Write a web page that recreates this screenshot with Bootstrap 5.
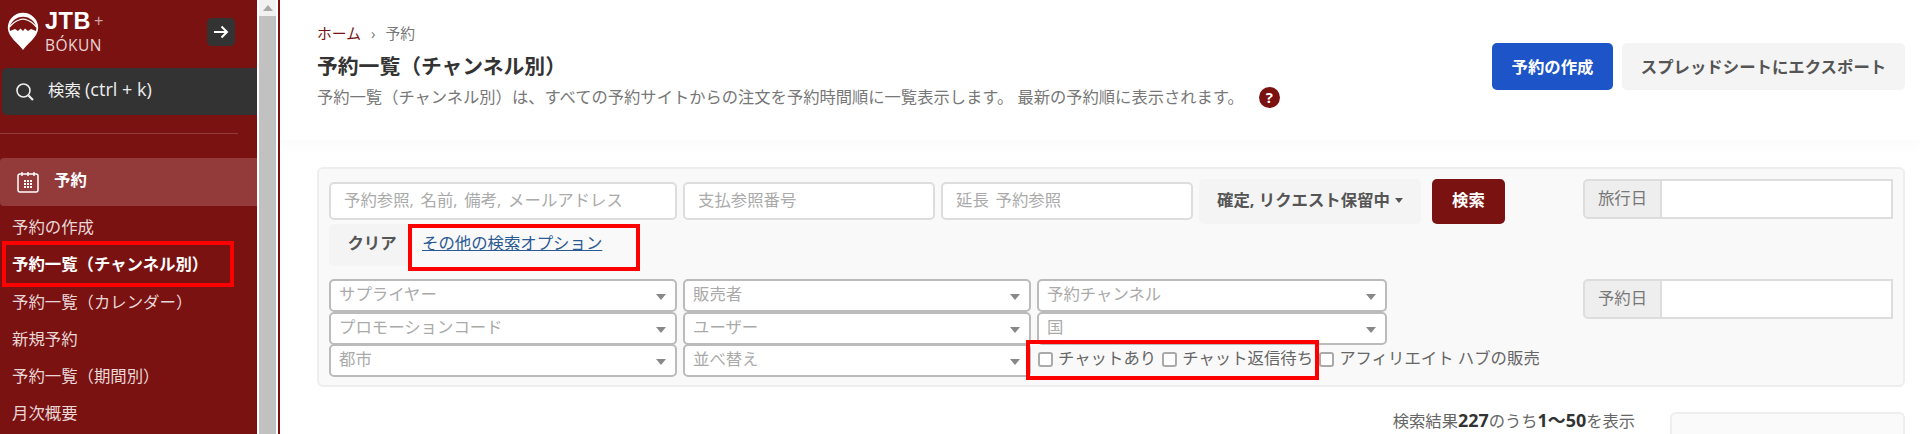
<!DOCTYPE html>
<html lang="ja">
<head>
<meta charset="utf-8">
<title>予約一覧</title>
<link href="https://cdn.jsdelivr.net/npm/bootstrap@5.3.0/dist/css/bootstrap.min.css" rel="stylesheet">
<style>
html,body{height:434px;overflow:hidden}
body{font-family:"Open Sans","Noto Sans CJK JP",sans-serif;font-size:16.4px;color:#555;background:#fff;position:relative}
.shell{height:434px;overflow:hidden}
.lat{font-size:1.1em}
.side{width:257px;background:#7a1212;flex:none;height:434px;overflow:hidden;color:#e9d6d6}
.logo-row{height:68px;padding:12px 0 0 7px}
.logo-words{margin-left:6px;color:#e8d5d5;line-height:1}
.logo-jtb{font-family:"Liberation Sans",sans-serif;font-weight:700;font-size:23.5px;color:#fff;line-height:18px;letter-spacing:.5px}
.logo-jtb span{font-weight:400;font-size:16px;color:#c9a5a5;vertical-align:3px;margin-left:3px}
.logo-bok{font-family:"Open Sans",sans-serif;font-size:15.5px;letter-spacing:.5px;margin-top:6px;line-height:18px}
.arrow-btn{width:28px;height:28px;background:#333;border-radius:5px;margin:6px 22px 0 auto;flex:none}
.side-search{height:47px;margin-left:2px;background:#333;border-radius:5px 0 0 5px;color:#eee;padding-left:13px;gap:13px}
.side-search span{margin-bottom:3px}
.side-rule{height:1px;width:238px;background:#933a3a;margin:18px 0 24px}
.side-active{height:48px;background:#933a3a;border-radius:4px 0 0 4px;color:#fff;font-weight:700;padding-left:17px;gap:15px}
.side-active span{margin-bottom:4px}
.side-list{padding:2px 0 0 12px;list-style:none;margin:0}
.side-list li{height:37.3px;line-height:37.3px;white-space:nowrap}
.side-list .on{font-weight:700;color:#fff}
.sbar{width:21px;flex:none;background:#fff;padding:0 2px;height:434px}
.sbar-up{height:16px;background:#f1f1f1}
.sbar-up::after{content:"";display:block;border:5px solid transparent;border-top:0;border-bottom:6px solid #a8a8a8;width:0;margin:auto;transform:translateY(5px)}
.sbar-thumb{height:418px;background:#c1c1c1}
.vline{width:2px;background:#7a1212;flex:none}
.main-col{flex:1;min-width:0}
.page-head{height:140px;padding:22px 15px 0 37px;box-shadow:0 6px 14px rgba(0,0,0,.025);background:#fff}
.crumbs{font-size:14.8px;line-height:22px;color:#777;gap:10px}
.crumbs a{color:#7a1212;text-decoration:none}
.ttl{font-size:20.8px;font-weight:700;color:#333;margin:10px 0 0;line-height:24px}
.desc{font-size:16.3px;color:#777;line-height:22px;margin-top:8px;gap:15px}
.help{width:21px;height:21px;border-radius:50%;background:#7a1212;color:#fff;font-size:15px;font-weight:700;line-height:21px;text-align:center;flex:none;margin-top:1px}
.head-btns{gap:9px;padding-top:21px}
.btn-make,.btn-exp{height:47px;font-size:16.4px;font-weight:700;border-radius:5px;border:0;line-height:44px;padding:0}
.btn-make{background:#1d55c8;color:#fff;width:121px;white-space:nowrap}
.btn-exp{background:#f4f4f4;color:#555;width:283px;white-space:nowrap}
.panel-box{margin:27px 15px 0 37px;height:220px;background:#f9f9f9;border:2px solid #eee;border-radius:6px;padding:13px 10px 0 10px}
.left-part{width:1254px;flex:none}
.inp{height:38px;border:2px solid #ddd;border-radius:5px;background:#fff;font-size:16.4px;padding:0 13px 3px;color:#aaa}
.inp::placeholder{color:#aaa;opacity:1;word-spacing:2.5px}
.i1{width:348px}.i2{width:252px}.i3{width:252px}
.row1{gap:6px;height:38px}
.stat-btn{width:222px;height:45px;margin-top:-3px;background:#f4f4f4;border:0;border-radius:5px;font-size:16.4px;font-weight:700;color:#555;white-space:nowrap;padding:0 0 3px;flex:none}
.stat-btn i{display:inline-block;border:4px solid transparent;border-top:5px solid #555;border-bottom:0;vertical-align:3px;margin-left:5px}
.find-btn{width:73px;height:45px;margin:-3px 0 0 5px;background:#7a1212;color:#fff;border:0;border-radius:5px;font-size:16.4px;font-weight:700;padding:0 0 3px;flex:none}
.row2{height:42px;margin-top:4px}
.clr{width:79px;height:42px;background:#f4f4f4;border:0;border-radius:5px 0 0 5px;font-weight:700;font-size:16.4px;color:#555;padding:0 0 3px 7px}
.more{color:#2a5a94;margin:0 0 3px 14px;font-size:16.4px}
.sel-grid{display:grid;grid-template-columns:348px 348px 350px;grid-auto-rows:32.5px;column-gap:6px;margin-top:13px}
.sel{height:33px;border:2px solid #bbb;border-radius:5px;background:#fff;color:#aaa;padding:0 8px;line-height:25px;font-size:16.4px}
.sel i{border:5px solid transparent;border-top:6px solid #888;border-bottom:0;margin-right:1px;margin-top:3px}
.checks{font-size:16.4px;color:#666;white-space:nowrap;height:32px;padding-bottom:3px}
.cbx{width:15px;height:15px;border:2px solid #aaa;border-radius:3px;background:#fff;flex:none;margin:2px 5px 0 6px}
.cbx.first{margin-left:1px}
.date-part{width:310px;flex:none}
.date-grp{height:40px;margin-top:-3px}
.date-grp+.date-grp{margin-top:60px}
.date-lab{width:79px;background:#eee;border:2px solid #ddd;border-radius:5px 0 0 5px;text-align:center;line-height:33px;color:#777}
.date-val{flex:1;background:#fff;border:2px solid #ddd;border-left:0}
.result-row{margin:25px 15px 0 0;gap:35px}
.result-text{font-size:16.3px;color:#666;margin-top:-2px;line-height:20px;white-space:nowrap}
.result-text b{color:#333}
.page-box{width:235px;height:22px;background:#fafafa;border:2px solid #eee;border-bottom:0;border-radius:6px 6px 0 0}
.mark-red{position:absolute;border:4px solid #f00;pointer-events:none}
.m1{left:2px;top:241px;width:232px;height:46px}
.m2{left:408px;top:224px;width:232px;height:47px}
.m3{left:1026px;top:340px;width:293px;height:40px}
</style>
</head>
<body>
<div class="d-flex shell">
  <aside class="side">
    <div class="logo-row d-flex">
      <svg width="32" height="38" viewBox="0 0 32 38" aria-hidden="true">
        <path d="M16 38C12 32 1 25 .8 16A15.2 15.2 0 0 1 31.2 16C31 25 20 32 16 38Z" fill="#fff"/>
        <path d="M2.6 16.5A13.5 13.5 0 0 1 29.4 16.5L29 19 24 17 21 19 18 16.5 16 19 13.5 16.5 11 19 8 17 3 19Z" fill="#7a1212"/>
        <path d="M2.5 15C6 11 9 9 12 8C14 7 18 7 20 8C23 9 26 11 29.5 15" stroke="#fff" stroke-width="1.3" fill="none"/>
      </svg>
      <div class="logo-words">
        <div class="logo-jtb">JTB<span>+</span></div>
        <div class="logo-bok">BÓKUN</div>
      </div>
      <div class="arrow-btn d-flex align-items-center justify-content-center">
        <svg width="16" height="14" viewBox="0 0 16 14" aria-hidden="true"><path d="M1 7H14M8.5 1.5 14 7 8.5 12.5" fill="none" stroke="#fff" stroke-width="2"/></svg>
      </div>
    </div>
    <div class="side-search d-flex align-items-center">
      <svg width="20" height="20" viewBox="0 0 20 20" aria-hidden="true"><circle cx="8.5" cy="8.5" r="6.5" fill="none" stroke="#eee" stroke-width="1.6"/><path d="M13.5 13.5 18 18" stroke="#eee" stroke-width="2.2"/></svg>
      <span>検索 <span class="lat">(ctrl + k)</span></span>
    </div>
    <div class="side-rule"></div>
    <div class="side-active d-flex align-items-center">
      <svg width="22" height="22" viewBox="0 0 22 22" aria-hidden="true"><rect x="1" y="3" width="20" height="18" rx="2" fill="none" stroke="#fff" stroke-width="1.5"/><path d="M5 1v4M11 1v4M17 1v4" stroke="#fff" stroke-width="1.4"/><path d="M7 9h2v2H7zM10 9h2v2h-2zM13 9h2v2h-2zM7 12h2v2H7zM10 12h2v2h-2zM13 12h2v2h-2zM7 15h2v2H7zM10 15h2v2h-2zM13 15h2v2h-2z" fill="#fff"/></svg>
      <span>予約</span>
    </div>
    <ul class="side-list">
      <li>予約の作成</li>
      <li class="on">予約一覧（チャンネル別）</li>
      <li>予約一覧（カレンダー）</li>
      <li>新規予約</li>
      <li>予約一覧（期間別）</li>
      <li>月次概要</li>
    </ul>
  </aside>
  <div class="sbar"><div class="sbar-up"></div><div class="sbar-thumb"></div></div>
  <div class="vline"></div>
  <main class="main-col">
    <div class="page-head d-flex justify-content-between">
      <div>
        <div class="crumbs d-flex align-items-center"><a href="#">ホーム</a><span>›</span><span>予約</span></div>
        <h1 class="ttl">予約一覧（チャンネル別）</h1>
        <div class="desc d-flex align-items-center"><span>予約一覧（チャンネル別）は、すべての予約サイトからの注文を予約時間順に一覧表示します。 最新の予約順に表示されます。</span><span class="help">?</span></div>
      </div>
      <div class="head-btns d-flex align-items-start">
        <button class="btn-make">予約の作成</button>
        <button class="btn-exp">スプレッドシートにエクスポート</button>
      </div>
    </div>
    <div class="panel-box d-flex">
      <div class="left-part">
        <div class="d-flex row1">
          <input class="inp i1" placeholder="予約参照, 名前, 備考, メールアドレス">
          <input class="inp i2" placeholder="支払参照番号">
          <input class="inp i3" placeholder="延長 予約参照">
          <button class="stat-btn">確定, リクエスト保留中<i></i></button>
          <button class="find-btn">検索</button>
        </div>
        <div class="row2 d-flex align-items-center">
          <button class="clr">クリア</button>
          <a class="more" href="#">その他の検索オプション</a>
        </div>
        <div class="sel-grid">
          <div class="sel d-flex justify-content-between"><span>サプライヤー</span><i class="align-self-center"></i></div>
          <div class="sel d-flex justify-content-between"><span>販売者</span><i class="align-self-center"></i></div>
          <div class="sel d-flex justify-content-between"><span>予約チャンネル</span><i class="align-self-center"></i></div>
          <div class="sel d-flex justify-content-between"><span>プロモーションコード</span><i class="align-self-center"></i></div>
          <div class="sel d-flex justify-content-between"><span>ユーザー</span><i class="align-self-center"></i></div>
          <div class="sel d-flex justify-content-between"><span>国</span><i class="align-self-center"></i></div>
          <div class="sel d-flex justify-content-between"><span>都市</span><i class="align-self-center"></i></div>
          <div class="sel d-flex justify-content-between"><span>並べ替え</span><i class="align-self-center"></i></div>
          <div class="checks d-flex align-items-center">
            <span class="cbx first"></span><span>チャットあり</span><span class="cbx"></span><span>チャット返信待ち</span><span class="cbx"></span><span>アフィリエイト ハブの販売</span>
          </div>
        </div>
      </div>
      <div class="date-part">
        <div class="date-grp d-flex"><div class="date-lab">旅行日</div><div class="date-val"></div></div>
        <div class="date-grp d-flex"><div class="date-lab">予約日</div><div class="date-val"></div></div>
      </div>
    </div>
    <div class="result-row d-flex justify-content-end">
      <div class="result-text">検索結果<b class="lat">227</b>のうち<b class="lat">1〜50</b>を表示</div>
      <div class="page-box"></div>
    </div>
  </main>
</div>
<div class="mark-red m1"></div>
<div class="mark-red m2"></div>
<div class="mark-red m3"></div>
</body>
</html>
